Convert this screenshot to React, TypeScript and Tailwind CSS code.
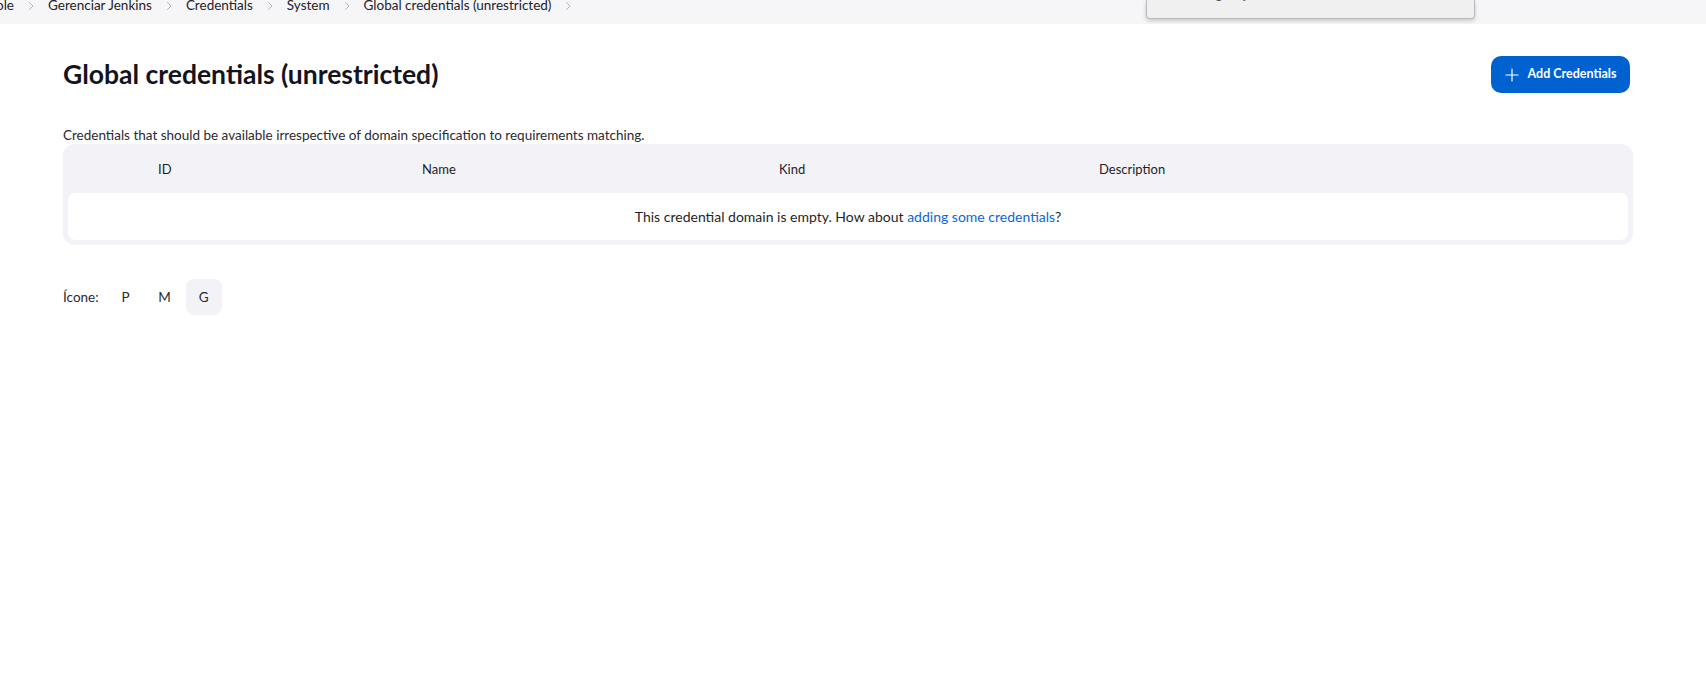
import React from "react";

const Chevron = () => (
  <svg width="8" height="10" viewBox="0 0 8 10" className="mx-[13px] mt-[4px]" fill="none">
    <path d="M2.5 1.5 L6 5 L2.5 8.5" stroke="#b4b4bc" strokeWidth="1" strokeLinecap="round" strokeLinejoin="round" />
  </svg>
);

export default function App() {
  const crumbs = ["Gerenciar Jenkins", "Credentials", "System", "Global credentials (unrestricted)"];
  return (
    <div className="relative w-full h-[684px] bg-white overflow-hidden text-[#1f1f24]" style={{ fontFamily: "Lato, 'Noto Sans', sans-serif" }}>
      <div className="h-[24px] bg-[#f6f6f8] overflow-hidden">
        <div className="flex items-start -mt-[3px] text-[13.5px] leading-[16px] text-[#222228]">
          <span className="-ml-[4px]">ole</span>
          <Chevron />
          {crumbs.map((c) => (
            <React.Fragment key={c}>
              <span>{c}</span>
              <Chevron />
            </React.Fragment>
          ))}
        </div>
      </div>

      <div className="absolute left-[1146px] top-0 w-[329px] h-[19px] bg-[#f0f0f0] border border-t-0 border-[#b9b9b9] rounded-b-[4px] shadow-[0_2px_4px_rgba(0,0,0,0.18)] overflow-hidden">
        <div className="pl-[38px] -mt-[14px] text-[13px] leading-[16px] text-[#555]">Configurações</div>
      </div>

      <div className="pl-[63px] pr-[73px]">
        <div className="mt-[32px] h-[37px] flex items-center justify-between">
          <h1 className="text-[26.5px] font-bold text-[#14141f] leading-none">Global credentials (unrestricted)</h1>
          <button className="h-[37px] w-[139px] mr-[3px] rounded-[10px] bg-[#0062d1] text-white text-[12.5px] font-bold flex items-center justify-center gap-[9px]">
            <svg width="14" height="14" viewBox="0 0 14 14" fill="none">
              <path d="M7 1 V13 M1 7 H13" stroke="white" strokeWidth="1.2" strokeLinecap="round" />
            </svg>
            <span>Add Credentials</span>
          </button>
        </div>

        <p className="mt-[34px] text-[13.5px] text-[#2a2a30] leading-[16px]">
          Credentials that should be available irrespective of domain specification to requirements matching.
        </p>

        <div className="mt-[1px] bg-[#f2f2f7] rounded-[12px] p-[5px] pt-0">
          <div className="h-[49px] pt-[2px] flex items-center text-[13px] text-[#1f1f24]">
            <div className="w-[90px]" />
            <div className="w-[264px]">ID</div>
            <div className="w-[357px]">Name</div>
            <div className="w-[320px]">Kind</div>
            <div>Description</div>
          </div>
          <div className="h-[47px] bg-white rounded-[8px] flex items-center justify-center text-[14px] text-[#1f1f24]">
            <span>
              This credential domain is empty. How about{" "}
              <a className="text-[#0b68d0]" href="#">adding some credentials</a>?
            </span>
          </div>
        </div>

        <div className="mt-[34px] flex items-center gap-[3px] text-[13.5px] text-[#2a2a30]">
          <span className="mr-[6px]">Ícone:</span>
          <span className="w-[36px] h-[36px] flex items-center justify-center">P</span>
          <span className="w-[36px] h-[36px] flex items-center justify-center">M</span>
          <span className="w-[36px] h-[36px] flex items-center justify-center bg-[#f2f2f7] rounded-[8px]">G</span>
        </div>
      </div>
    </div>
  );
}
